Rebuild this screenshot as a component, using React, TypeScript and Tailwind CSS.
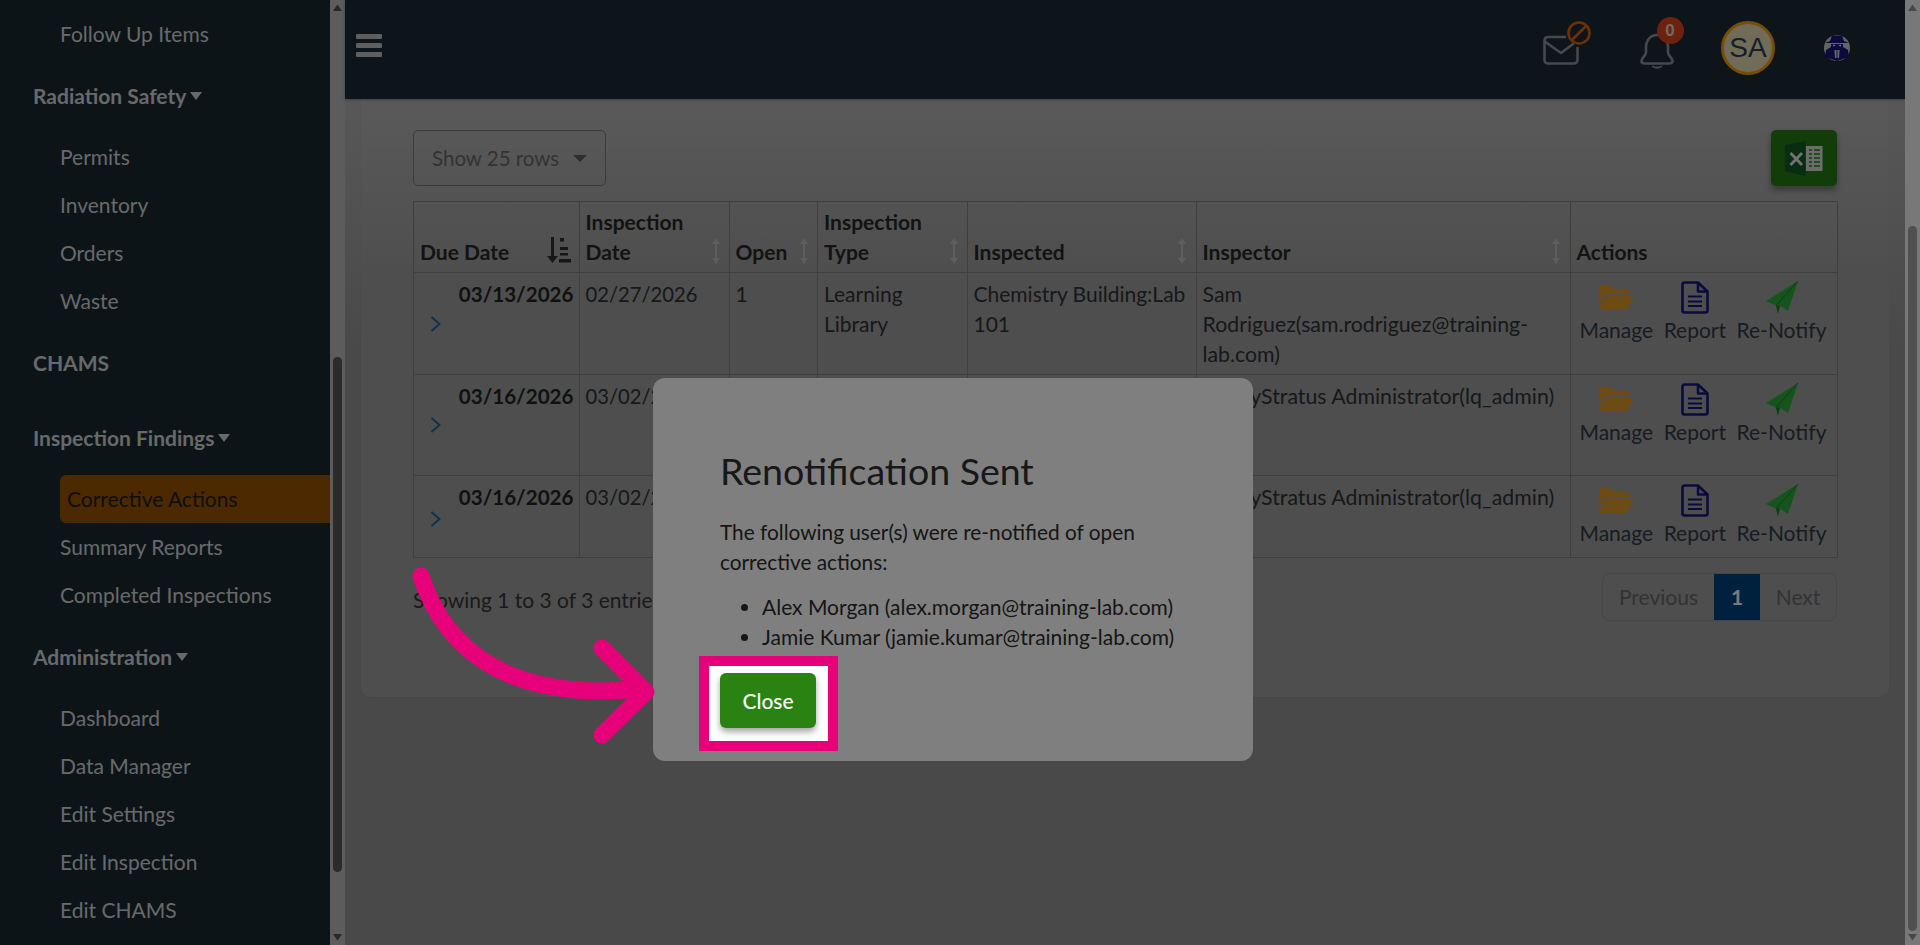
import React from "react";

const Caret = () => (
  <span className="inline-block ml-[4px] w-0 h-0 border-x-[6.5px] border-t-[8px] border-x-transparent border-t-[#cfd3d6] align-middle" />
);

const Item = ({ label, active }: { label: string; active?: boolean }) =>
  active ? (
    <div className="ml-[60px] h-[48px] flex items-center pl-[7px] bg-[#985200] rounded-l-[6px] text-[#1e1e1e]">{label}</div>
  ) : (
    <div className="ml-[60px] h-[48px] flex items-center text-[#cfd3d6]">{label}</div>
  );

const Section = ({ label, caret, className }: { label: string; caret?: boolean; className: string }) => (
  <div className={`ml-[33px] h-[48px] flex items-center font-bold text-[#cfd3d6] ${className}`}>
    {label}
    {caret && <Caret />}
  </div>
);

const Sidebar = () => (
  <div className="w-[330px] shrink-0 h-full overflow-hidden bg-[#1a2830] pt-[10px]">
    <Item label="Follow Up Items" />
    <Section label="Radiation Safety" caret className="mt-[14px]" />
    <div className="mt-[13px]">
      <Item label="Permits" />
      <Item label="Inventory" />
      <Item label="Orders" />
      <Item label="Waste" />
    </div>
    <Section label="CHAMS" className="mt-[14px]" />
    <Section label="Inspection Findings" caret className="mt-[27px]" />
    <div className="mt-[13px]">
      <Item label="Corrective Actions" active />
      <Item label="Summary Reports" />
      <Item label="Completed Inspections" />
    </div>
    <Section label="Administration" caret className="mt-[14px]" />
    <div className="mt-[13px]">
      <Item label="Dashboard" />
      <Item label="Data Manager" />
      <Item label="Edit Settings" />
      <Item label="Edit Inspection" />
      <Item label="Edit CHAMS" />
    </div>
  </div>
);

const Scrollbar = ({ track, thumb, arrow, top, height }: { track: string; thumb: string; arrow: string; top: string; height: string }) => (
  <div className={`w-[15px] shrink-0 h-full flex flex-col items-center justify-between relative ${track}`}>
    <svg width="15" height="15" viewBox="0 0 15 15" className={arrow}><path d="M7.5 4.5 L12 11 L3 11 Z" fill="currentColor" /></svg>
    <div className={`absolute left-[3px] w-[9px] rounded-full ${thumb} ${top} ${height}`} />
    <svg width="15" height="15" viewBox="0 0 15 15" className={arrow}><path d="M3 4 L12 4 L7.5 10.5 Z" fill="currentColor" /></svg>
  </div>
);

const MailIcon = () => (
  <svg width="36" height="30" viewBox="0 0 36 30" fill="none" stroke="#8c9298" strokeWidth="2.6" strokeLinecap="round" strokeLinejoin="round">
    <path d="M22 2 H5 a3.5 3.5 0 0 0 -3.5 3.5 V25 a3.5 3.5 0 0 0 3.5 3.5 H31 a3.5 3.5 0 0 0 3.5 -3.5 V13" />
    <path d="M2.5 7 L18 18 L30 9" />
  </svg>
);

const BellIcon = () => (
  <svg width="34" height="36" viewBox="0 0 34 36" fill="none" stroke="#8c9298" strokeWidth="2.6" strokeLinecap="round" strokeLinejoin="round">
    <path d="M17 2 C10 2 6 8 6 14 V19 C6 23 1.5 25 1.5 28 C1.5 30 3 30.5 5 30.5 H29 C31 30.5 32.5 30 32.5 28 C32.5 25 28 23 28 19 V14 C28 8 24 2 17 2 Z" />
    <path d="M13 33.5 Q17 36 21 33.5" strokeWidth="2" />
  </svg>
);

const Logo = () => (
  <svg width="26" height="26" viewBox="0 0 26 26">
    <circle cx="13" cy="13" r="13" fill="#c8c8c8" />
    <path d="M8 0.5 L18 0.5 L20 6 L25 8 L1 8 L6 6 Z" fill="#14147a" />
    <path d="M7 9 H19 V12 L24 15 L25 22 L13 26 L1 22 L2 15 L7 12 Z" fill="#14147a" />
    <path d="M9 9.5 L12 10.5 L9 11.5 Z M17 9.5 L14 10.5 L17 11.5 Z M10.5 15 L12.5 15 L12.5 23 L11 23 Z M13.5 15 L15.5 15 L15 23 L13.5 23 Z" fill="#d8d8d8" />
  </svg>
);

const Header = () => (
  <div className="h-[99px] shrink-0 bg-[#1c2a35] flex items-center relative pl-[10.5px] shadow-[0_1px_3px_rgba(0,0,0,0.3)]">
    <div className="flex flex-col gap-[4px] w-[26px] -mt-[9px]">
      <div className="h-[5px] bg-[#b8bcc0] rounded-[1px]" />
      <div className="h-[5px] bg-[#b8bcc0] rounded-[1px]" />
      <div className="h-[5px] bg-[#b8bcc0] rounded-[1px]" />
    </div>
    <div className="ml-auto flex items-center -mt-[3px]">
      <div className="relative w-[36px] h-[30px] mt-[3px]">
        <MailIcon />
        <svg width="24" height="24" viewBox="0 0 24 24" fill="none" stroke="#d96200" strokeWidth="2.6" className="absolute left-[24px] top-[-14px]">
          <circle cx="12" cy="12" r="10.5" />
          <path d="M5 19 L19 5" />
        </svg>
      </div>
      <div className="relative w-[34px] h-[36px] ml-[61px] mt-[5px]">
        <BellIcon />
        <div className="absolute left-[16.5px] top-[-15.5px] w-[27px] h-[27px] rounded-full bg-[#d8441c] flex items-center justify-center text-[17px] font-bold text-[#e9d0c8] [font-family:'Liberation_Sans',sans-serif]">0</div>
      </div>
      <div className="w-[54px] h-[54px] ml-[47px] rounded-full border-[3px] border-[#f09c08] bg-[#e0d8b0] flex items-center justify-center text-[28px] text-[#2e3a52] [font-family:'Liberation_Sans',sans-serif]">SA</div>
      <div className="ml-[49px] mr-[55px] flex"><Logo /></div>
    </div>
  </div>
);

const SortBoth = ({ className }: { className: string }) => (
  <svg width="8" height="26" viewBox="0 0 8 26" className={`absolute top-[36px] ${className}`} fill="#bcbcbc">
    <path d="M4 0 L8 6 H5 V20 H8 L4 26 L0 20 H3 V6 H0 Z" />
  </svg>
);

const SortDown = () => (
  <svg width="24" height="26" viewBox="0 0 24 26" className="absolute top-[35px] right-[8px]" fill="#2e2e2e">
    <path d="M4 0 H7 V19 H11 L5.5 26 L0 19 H4 Z" />
    <rect x="13" y="1" width="4" height="3.5" />
    <rect x="13" y="10" width="8" height="3" />
    <rect x="13" y="16" width="8" height="2.5" />
    <rect x="12" y="22" width="12" height="3.5" />
  </svg>
);

const Folder = () => (
  <svg width="34" height="25" viewBox="0 0 34 25" fill="#d8962a">
    <path d="M0 3 a3 3 0 0 1 3 -3 H11 L15 4 H27 a3 3 0 0 1 3 3 V9 H9 a4 4 0 0 0 -4 2.5 L0 21 Z" />
    <path d="M10 11 H32 a2 2 0 0 1 1.8 3 L28 24 a2 2 0 0 1 -2 1 H2 a1.5 1.5 0 0 1 -1.3 -2.3 L6.5 13 a4 4 0 0 1 3.5 -2 Z" />
  </svg>
);

const Report = () => (
  <svg width="28" height="33" viewBox="0 0 28 33" fill="none" stroke="#14147c" strokeWidth="2.6" strokeLinejoin="round">
    <path d="M1.5 3.5 a2 2 0 0 1 2 -2 H17 L26.5 10.5 V29.5 a2 2 0 0 1 -2 2 H3.5 a2 2 0 0 1 -2 -2 Z" />
    <path d="M17 1.5 V10.5 H26.5" />
    <path d="M7 15.5 H21 M7 20.5 H21 M7 25 H21" strokeWidth="2.2" />
  </svg>
);

const Plane = () => (
  <svg width="32" height="33" viewBox="0 0 32 33">
    <path d="M0 20 L32 0 L22 30 L14 24.5 L12 32.5 L10 24.5 Z" fill="#2aa838" />
    <path d="M10 24.5 L12 32.5 L14 24.5 Z" fill="#1c7a28" />
    <path d="M32 0 L10 24.5" stroke="#1c7a28" strokeWidth="1" />
  </svg>
);

const Actions = () => (
  <div className="flex gap-[10.5px] pl-[3px] text-[#2e3844]">
    <div className="flex flex-col items-center">
      <div className="h-[33px] flex items-center"><Folder /></div>
      <div className="mt-[1px]">Manage</div>
    </div>
    <div className="flex flex-col items-center">
      <div className="h-[33px] flex items-center"><Report /></div>
      <div className="mt-[1px]">Report</div>
    </div>
    <div className="flex flex-col items-center">
      <div className="h-[33px] flex items-center"><Plane /></div>
      <div className="mt-[1px]">Re-Notify</div>
    </div>
  </div>
);

const rows = [
  { due: "03/13/2026", date: "02/27/2026", type: "Learning Library", where: "Chemistry Building:Lab 101", who: "Sam Rodriguez(sam.rodriguez@training-lab.com)", h: "h-[102px]", chev: "top-1/2" },
  { due: "03/16/2026", date: "03/02/2026", type: "Learning Library", where: "Chemistry Building:Lab 101", who: "SafetyStratus Administrator(lq_admin)", h: "h-[101px]", chev: "top-1/2" },
  { due: "03/16/2026", date: "03/02/2026", type: "Lab", where: "Lab 102", who: "SafetyStratus Administrator(lq_admin)", h: "h-[82px]", chev: "top-[53%]" },
];

const th = "relative align-bottom text-left font-bold px-[6px] pb-[5px] pt-[4px] border border-[#7e7e7e] text-[#262626]";
const td = "align-top px-[6px] pt-[6px] border border-[#7e7e7e] text-[#2c3034]";

const Table = () => (
  <table className="w-[1424px] mt-[15px] table-fixed border-collapse">
    <colgroup>
      <col className="w-[165.5px]" />
      <col className="w-[150px]" />
      <col className="w-[88.5px]" />
      <col className="w-[149.5px]" />
      <col className="w-[229px]" />
      <col className="w-[374px]" />
      <col className="w-[267.5px]" />
    </colgroup>
    <thead>
      <tr className="h-[71px]">
        <th className={th}>Due Date<SortDown /></th>
        <th className={th}>Inspection Date<SortBoth className="right-[9px]" /></th>
        <th className={th}>Open<SortBoth className="right-[9px]" /></th>
        <th className={th}>Inspection Type<SortBoth className="right-[9px]" /></th>
        <th className={th}>Inspected<SortBoth className="right-[10px]" /></th>
        <th className={th}>Inspector<SortBoth className="right-[10px]" /></th>
        <th className={th}>Actions</th>
      </tr>
    </thead>
    <tbody>
      {rows.map((r, i) => (
        <tr key={i} className={r.h}>
          <td className={`${td} relative text-right font-bold text-[#222222] text-[20.6px] !px-[5px]`}>
            <svg width="11" height="16" viewBox="0 0 11 16" fill="none" stroke="#186098" strokeWidth="1.8" className={`absolute left-[16px] -translate-y-1/2 ${r.chev}`}>
              <path d="M1.5 1 L9.5 8 L1.5 15" />
            </svg>
            {r.due}
          </td>
          <td className={`${td} text-[20.2px]`}>{r.date}</td>
          <td className={td}>1</td>
          <td className={td}>{r.type}</td>
          <td className={td}>{r.where}</td>
          <td className={`${td} text-[21.3px]`}>{r.who}</td>
          <td className={`${td} !pt-[8px]`}><Actions /></td>
        </tr>
      ))}
    </tbody>
  </table>
);

const Content = () => (
  <div className="flex-1 min-h-0 px-[16px] bg-linear-to-b from-[#b0b0b0] to-[#929292] to-[30%]">
    <div className="h-[598px] pt-[31px] pl-[52px] pr-[52px] rounded-b-[10px] bg-linear-to-b from-[#b4b4b4] to-[#9c9c9c] to-[30%] shadow-[0_1px_2px_rgba(0,0,0,0.05)]">
      <div className="flex justify-between items-start h-[56px]">
        <div className="w-[193px] h-[56px] border border-[#767676] rounded-[5px] flex items-center pl-[18px] text-[#666666] text-[20.5px]">
          Show 25 rows
          <span className="ml-[14px] w-0 h-0 border-x-[7px] border-t-[7px] border-x-transparent border-t-[#5c5c5c]" />
        </div>
        <div className="w-[66px] h-[56px] rounded-[5px] bg-[#247a10] shadow-[0_4px_6px_rgba(0,0,0,0.35)] flex items-center justify-center">
          <svg width="38" height="35" viewBox="0 0 38 35">
            <rect x="20.5" y="5" width="17" height="25" fill="#d8d8d8" />
            <path d="M24 9h3M29 9h6M24 13h3M29 13h6M24 17h3M29 17h6M24 21h3M29 21h6M24 25h3M29 25h6" stroke="#247a10" strokeWidth="1.6" />
            <path d="M0 4.3 L20.7 0 V35 L0 30 Z" fill="#115a26" />
            <path d="M5.5 12 L17 24 M17 12 L5.5 24" stroke="#e4e4e4" strokeWidth="2.8" />
          </svg>
        </div>
      </div>
      <Table />
      <div className="mt-[15px] flex items-center justify-between">
        <div className="text-[#343434] mt-[6px]">Showing 1 to 3 of 3 entries</div>
        <div className="flex h-[48px] w-[235px] border border-[#8c8c8c] rounded-[8px] overflow-hidden text-[#666666]">
          <div className="w-[111px] flex items-center justify-center">Previous</div>
          <div className="w-[46px] flex items-center justify-center bg-[#004080] text-[#f4f4f4] font-bold">1</div>
          <div className="flex-1 flex items-center justify-center">Next</div>
        </div>
      </div>
    </div>
  </div>
);

const Modal = () => (
  <div className="absolute left-[653px] top-[378px] w-[600px] h-[383px] bg-white rounded-[12px] pl-[67px] pt-[68px] text-[#2c2c2c]">
    <h2 className="text-[37.5px] leading-[50px] text-[#303030]">Renotification Sent</h2>
    <p className="mt-[21px] w-[480px] text-[20.8px]">The following user(s) were re-notified of open corrective actions:</p>
    <ul className="list-disc pl-[42px] mt-[15px]">
      <li>Alex Morgan (alex.morgan@training-lab.com)</li>
      <li>Jamie Kumar (jamie.kumar@training-lab.com)</li>
    </ul>
  </div>
);

export default function App() {
  return (
    <div className="relative w-[1920px] h-[945px] overflow-hidden flex [font-family:Lato,sans-serif] text-[21px] leading-[30px]">
      <Sidebar />
      <Scrollbar track="bg-[#b8b8b8]" thumb="bg-[#565656]" arrow="text-[#505050]" top="top-[357px]" height="h-[515px]" />
      <div className="flex-1 min-w-0 h-full flex flex-col">
        <Header />
        <Content />
      </div>
      <Scrollbar track="bg-[#f1f1f1]" thumb="bg-[#a0a0a0]" arrow="text-[#909090]" top="top-[226px]" height="h-[705px]" />
      <Modal />
      <div className="absolute inset-0 bg-black/50" />
      <div className="absolute left-[699px] top-[656px] w-[139px] h-[95px] border-[10px] border-[#e6007a] bg-white">
        <div className="ml-[11px] mt-[7px] w-[96px] h-[55px] rounded-[6px] bg-[#2a8212] text-white font-medium flex items-center justify-center shadow-[0_4px_6px_rgba(0,0,0,0.35)]">Close</div>
      </div>
      <svg className="absolute left-[400px] top-[560px]" width="270" height="190" viewBox="400 560 270 190" fill="none" stroke="#e6007a" strokeWidth="17" strokeLinecap="round" strokeLinejoin="round">
        <path d="M421 576 C 445 650, 510 702, 640 689" />
        <path d="M602 648 L646 692 L602 735" />
      </svg>
    </div>
  );
}
